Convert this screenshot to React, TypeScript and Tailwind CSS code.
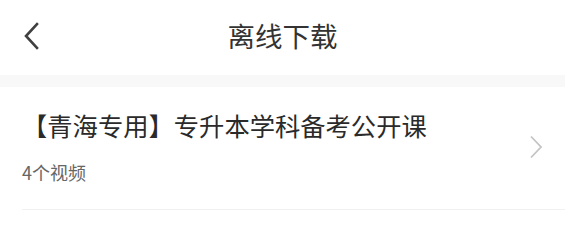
export default function App() {
  return (
    <div className="w-[565px] h-[233px] bg-white overflow-hidden font-['Noto_Sans_CJK_SC','Noto_Sans',sans-serif]">
      <header className="relative flex h-[75px] items-center justify-center">
        <button className="absolute left-[20px] top-[20px] flex h-[32px] w-[22px] items-center justify-center" aria-label="返回">
          <svg width="16" height="28" viewBox="0 0 16 28" fill="none">
            <path d="M14 2 L3 14 L14 26" stroke="#404040" strokeWidth="2.6" strokeLinecap="square" strokeLinejoin="miter" />
          </svg>
        </button>
        <h1 className="mt-[-3px] text-[27.5px] leading-none text-[#333]">离线下载</h1>
      </header>
      <div className="h-[12px] bg-[#f8f8f8]" />
      <div className="pl-[22px]">
        <div className="flex h-[123px] items-center border-b border-[#f1f1f1] pr-[22px]">
          <div className="flex flex-1 flex-col">
            <div className="mt-[-2px] text-[25.3px] leading-none text-[#2a2a2a]">【青海专用】专升本学科备考公开课</div>
            <div className="mt-[24px] text-[18px] leading-none text-[#666]">4个视频</div>
          </div>
          <svg width="14" height="24" viewBox="0 0 14 24" fill="none" className="mt-[-2px]">
            <path d="M2 1.5 L12 12 L2 22.5" stroke="#c4c4c4" strokeWidth="1.8" />
          </svg>
        </div>
      </div>
    </div>
  )
}
